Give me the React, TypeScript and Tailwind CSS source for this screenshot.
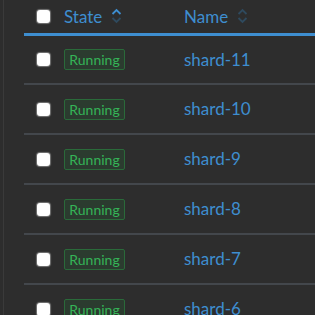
const shards = ['shard-11', 'shard-10', 'shard-9', 'shard-8', 'shard-7', 'shard-6'];

const SortIcon = ({ active }: { active?: boolean }) => (
  <svg width="11" height="16" viewBox="0 0 11 16" className="ml-[9px]" fill="none">
    <path d="M1.5 6 L5.5 2 L9.5 6" stroke={active ? '#3e8ed0' : '#2f4a5e'} strokeWidth="1.8" />
    <path d="M1.5 10 L5.5 14 L9.5 10" stroke="#2f4a5e" strokeWidth="1.8" />
  </svg>
);

const Checkbox = () => (
  <div className="h-[13px] w-[13px] rounded-[3px] bg-white shadow-[0_0_1px_1px_rgba(255,255,255,0.35)]" />
);

export default function App() {
  return (
    <div
      className="h-[315px] w-[315px] overflow-hidden bg-[#2d2d2d] pl-[3px]"
      style={{ fontFamily: 'Lato, "Open Sans", sans-serif' }}
    >
      <div className="h-full border-l border-[#3a3a3a] pl-[20px]">
        <table className="w-full table-fixed border-collapse">
          <colgroup>
            <col className="w-[40px]" />
            <col className="w-[120px]" />
            <col />
          </colgroup>
          <thead>
            <tr className="h-[34px] border-b-[3px] border-[#3e8ed0]">
              <th className="p-0 pl-[13px]">
                <Checkbox />
              </th>
              <th className="p-0 text-left">
                <div className="flex items-center text-[17px] font-normal text-[#3e8ed0]">
                  State
                  <SortIcon active />
                </div>
              </th>
              <th className="p-0 text-left">
                <div className="flex items-center text-[17px] font-normal text-[#3e8ed0]">
                  Name
                  <SortIcon />
                </div>
              </th>
            </tr>
          </thead>
          <tbody>
            {shards.map((s) => (
              <tr key={s} className="h-[50px] border-b-2 border-[#43474c]">
                <td className="p-0 pl-[13px]">
                  <Checkbox />
                </td>
                <td className="p-0">
                  <span className="inline-flex h-[21px] w-[61px] items-center justify-center rounded-[2px] border border-[#2a6a3a] bg-[#2b3b2f] text-[14px] text-[#35b457]">
                    Running
                  </span>
                </td>
                <td className="p-0 text-[17px] text-[#3e8ed0]">{s}</td>
              </tr>
            ))}
          </tbody>
        </table>
      </div>
    </div>
  );
}
